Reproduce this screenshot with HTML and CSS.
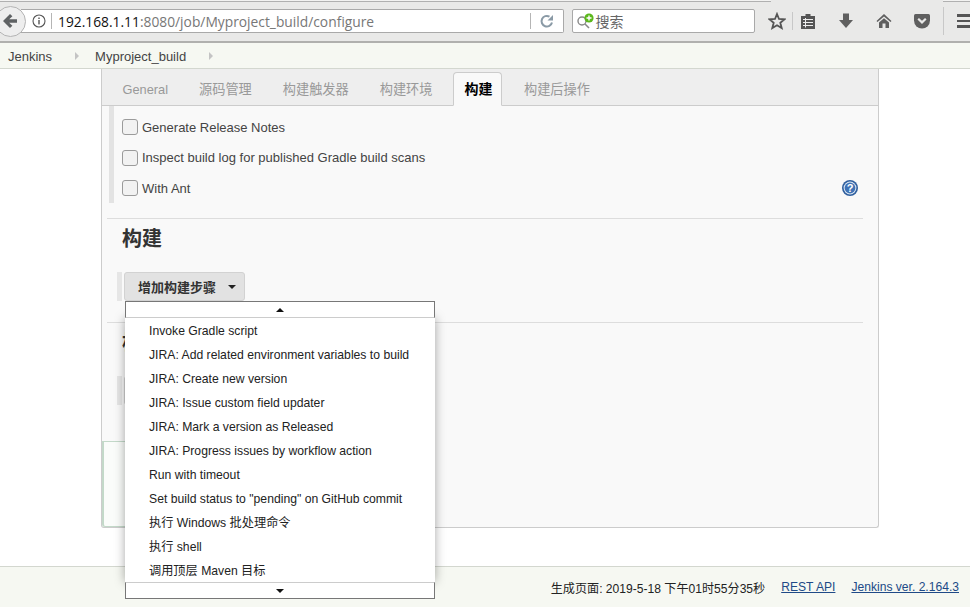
FILE: index.html
```html
<!DOCTYPE html>
<html lang="zh-CN">
<head>
    <meta charset="UTF-8">
    <title>Myproject_build Config</title>
    <link rel="stylesheet" href="styles.css">
</head>
<body>
  <div class="tabstrip">
    <span class="edge left"></span>
    <span class="edge gap"></span>
    <span class="edge right"></span>
  </div>
  <header class="toolbar">
    <div class="back-btn">
      <svg width="16" height="16" viewBox="0 0 16 16"><path d="M8 1 L1 8 L8 15 L10.4 12.8 L7.2 9.8 H15 V6.2 H7.2 L10.4 3.2 Z" fill="#5f6264"/></svg>
    </div>
    <div class="urlbar">
      <svg class="info" width="14" height="14" viewBox="0 0 14 14"><circle cx="7" cy="7" r="6" fill="none" stroke="#555" stroke-width="1.1"/><rect x="6.3" y="6" width="1.4" height="4.4" fill="#555"/><rect x="6.3" y="3.5" width="1.4" height="1.5" fill="#555"/></svg>
      <span class="url-sep"></span>
      <span class="url"><span class="url-host">192.168.1.11</span>:8080/job/Myproject_build/configure</span>
      <span class="url-sep right"></span>
      <svg class="reload" width="16" height="16" viewBox="0 0 16 16"><path d="M13 9.5 A5.3 5.3 0 1 1 10.5 3.6" fill="none" stroke="#8a9aa6" stroke-width="2"/><path d="M8.5 7.5 H14 V2 Z" fill="#8a9aa6"/></svg>
    </div>
    <div class="searchbar">
      <svg class="search-icon" width="20" height="18" viewBox="0 0 20 18"><circle cx="6" cy="9" r="4" fill="none" stroke="#888" stroke-width="1.4"/><path d="M9 12 L13 16" stroke="#888" stroke-width="1.6"/><circle cx="13" cy="6" r="4.6" fill="#5cb81c"/><path d="M13 3.5 V8.5 M10.5 6 H15.5" stroke="#fff" stroke-width="1.4"/></svg>
      <span class="search-text">搜索</span>
    </div>
    <div class="tool-icons">
      <svg width="18" height="18" viewBox="0 0 18 18"><path d="M9 2 L11 7 L16.5 7.3 L12.3 10.8 L13.7 16 L9 13.2 L4.3 16 L5.7 10.8 L1.5 7.3 L7 7 Z" fill="none" stroke="#555" stroke-width="1.8"/></svg>
      <span class="tool-sep"></span>
      <svg class="ic-list" width="16" height="18" viewBox="0 0 16 18"><path d="M1 4 H5.5 V2 H10.5 V4 H15 V17 H1 Z" fill="#555"/><path d="M3 7.5 H13 M3 10.5 H13 M3 13.5 H13" stroke="#eee" stroke-width="1.2"/><path d="M5.5 6 V15.5" stroke="#eee" stroke-width="1"/></svg>
      <svg class="ic-down" width="16" height="18" viewBox="0 0 16 18"><path d="M5 1.5 H11 V8 H15 L8 16 L1 8 H5 Z" fill="#5f5f5f"/></svg>
      <svg class="ic-home" width="18" height="18" viewBox="0 0 18 18"><path d="M9 2 L1.5 9 L2.5 10 L9 4.5 L15.5 10 L16.5 9 Z" fill="#5f5f5f"/><path d="M4 10.5 L9 6.2 L14 10.5 V16 H10.5 V11.5 H7.5 V16 H4 Z" fill="#5f5f5f"/></svg>
      <svg class="ic-pocket" width="18" height="18" viewBox="0 0 18 18"><path d="M2.5 2 H15.5 Q17 2 17 3.5 V8.5 A8 8 0 0 1 1 8.5 V3.5 Q1 2 2.5 2 Z" fill="#5f5f5f"/><path d="M5.2 6.8 L9 10.4 L12.8 6.8" fill="none" stroke="#e9e9e8" stroke-width="2.2"/></svg>
      <span class="tool-sep tall"></span>
      <span class="hamburger"><i></i><i></i><i></i></span>
    </div>
  </header>

  <nav class="breadcrumbs">
    <a>Jenkins</a><span class="crumb-arrow"></span>
    <a>Myproject_build</a><span class="crumb-arrow"></span>
  </nav>

  <main class="page">
    <section class="panel">
      <div class="tabbar">
        <span class="tab latin">General</span>
        <span class="tab">源码管理</span>
        <span class="tab">构建触发器</span>
        <span class="tab">构建环境</span>
        <span class="tab active">构建</span>
        <span class="tab">构建后操作</span>
      </div>

      <div class="options">
        <label class="option"><input type="checkbox">Generate Release Notes</label>
        <label class="option"><input type="checkbox">Inspect build log for published Gradle build scans</label>
        <label class="option"><input type="checkbox">With Ant
          <svg class="help" width="16" height="16" viewBox="0 0 16 16"><circle cx="8" cy="8" r="8" fill="#2f5f9e"/><circle cx="8" cy="8" r="6.4" fill="#dfe8f3"/><circle cx="8" cy="8" r="5.4" fill="#3f72b5"/><text x="8" y="11.8" text-anchor="middle" class="help-mark">?</text></svg>
        </label>
      </div>

      <div class="section">
        <h2 class="section-title">构建</h2>
        <div class="add-step">
          <button class="add-btn">增加构建步骤<span class="caret"></span></button>
        </div>
      </div>

      <!-- this section sits behind the open menu, only its left edge shows -->
      <div class="section after">
        <h2 class="section-title sliver">构</h2>
        <div class="add-step">
          <button class="add-btn covered"></button>
        </div>
      </div>

      <div class="savebar"></div>
    </section>
  </main>

  <footer class="footer">
    <span>生成页面: 2019-5-18 下午01时55分35秒</span>
    <a>REST API</a>
    <a>Jenkins ver. 2.164.3</a>
  </footer>

  <div class="menu">
    <div class="menu-scroll up"><span></span></div>
    <ul class="menu-list">
      <li>Invoke Gradle script</li>
      <li>JIRA: Add related environment variables to build</li>
      <li>JIRA: Create new version</li>
      <li>JIRA: Issue custom field updater</li>
      <li>JIRA: Mark a version as Released</li>
      <li>JIRA: Progress issues by workflow action</li>
      <li>Run with timeout</li>
      <li>Set build status to "pending" on GitHub commit</li>
      <li>执行 Windows 批处理命令</li>
      <li>执行 shell</li>
      <li>调用顶层 Maven 目标</li>
    </ul>
    <div class="menu-scroll down"><span></span></div>
  </div>
</body>
</html>
```

FILE: styles.css
```css
* {
    margin: 0;
    padding: 0;
    box-sizing: border-box;
}
html, body {
    height: 607px;
    overflow: hidden;
}
body {
    display: flex;
    flex-direction: column;
    background: white;
    color: #333;
    font-family: "Liberation Sans", "Noto Sans CJK SC", sans-serif;
    font-size: 13px;
}

/* browser chrome */
.tabstrip {
    display: flex;
    flex: none;
    height: 2px;
    background: #e9e9e8;
}
.edge.left {
    width: 771px;
    background: #f2f2f1;
    border-bottom: 1px solid #b0b0b0;
}
.edge.gap {
    width: 172px;
}
.edge.right {
    flex: 1;
    background: #f2f2f1;
    border-bottom: 1px solid #b0b0b0;
}
.toolbar {
    display: flex;
    align-items: center;
    flex: none;
    height: 41px;
    padding-bottom: 1px;
    background: #e9e9e8;
    border-bottom: 2px solid #b0b0ae;
}
.back-btn {
    display: flex;
    align-items: center;
    justify-content: center;
    flex: none;
    position: relative;
    z-index: 1;
    width: 31px;
    height: 31px;
    margin-left: -5px;
    padding-right: 1px;
    background: #eee;
    border: 1px solid #b4b4b4;
    border-radius: 50%;
}
.urlbar {
    display: flex;
    align-items: center;
    width: 544px;
    height: 24px;
    margin-left: -5px;
    background: white;
    border: 1px solid #a9a9a9;
    border-left: none;
    border-radius: 0 2px 2px 0;
}
.info {
    margin-left: 11px;
}
.url-sep {
    width: 1px;
    height: 16px;
    margin-left: 5px;
    background: #b5b5b5;
}
.url-sep.right {
    margin-left: auto;
}
.url {
    margin-left: 6px;
    font-family: "Open Sans", "Noto Sans", sans-serif;
    font-size: 13.8px;
    color: #777;
    white-space: nowrap;
}
.url-host {
    color: #111;
}
.reload {
    margin: 0 8px 0 8px;
}
.searchbar {
    display: flex;
    align-items: center;
    width: 184px;
    height: 24px;
    margin-left: 8px;
    background: white;
    border: 1px solid #a9a9a9;
    border-radius: 2px;
}
.search-icon {
    margin-left: 3px;
    flex: none;
}
.search-text {
    font-family: "Noto Sans CJK SC", sans-serif;
    font-size: 14px;
    color: #666;
}
.tool-icons {
    display: flex;
    align-items: center;
    height: 30px;
    margin-left: 13px;
}
.tool-sep {
    width: 1px;
    height: 18px;
    margin: 0 7px 0 6px;
    background: #c8c8c8;
}
.tool-sep.tall {
    height: 28px;
    margin: 0 13px 0 12px;
}
.ic-down {
    margin-left: 22px;
}
.ic-home {
    margin-left: 21px;
}
.ic-pocket {
    margin-left: 20px;
}
.hamburger {
    display: flex;
    flex-direction: column;
    gap: 3px;
    width: 13px;
}
.hamburger i {
    display: block;
    height: 2.5px;
    background: #555;
}

/* jenkins breadcrumb */
.breadcrumbs {
    display: flex;
    align-items: center;
    flex: none;
    height: 26px;
    padding: 1px 0 0 8px;
    background: #f6f8f2;
    border-bottom: 1px solid #d3d7cf;
    color: #444;
}
.crumb-arrow {
    width: 0;
    height: 0;
    margin: 0 16px 0 23px;
    border-left: 4px solid #c4c4c4;
    border-top: 4px solid transparent;
    border-bottom: 4px solid transparent;
}

/* config panel */
.page {
    flex: 1;
    padding: 0 91px 38px 101px;
    min-height: 0;
}
.panel {
    display: flex;
    flex-direction: column;
    height: 100%;
    background: #f9f9f9;
    border: 1px solid #ccc;
    border-top: none;
    border-radius: 0 0 3px 3px;
}
.tabbar {
    display: flex;
    align-items: flex-end;
    flex: none;
    height: 37px;
    padding-left: 5px;
    background: #eee;
    border-bottom: 1px solid #ccc;
}
.tab {
    height: 34px;
    padding: 2px 14.5px 0;
    line-height: 32px;
    font-size: 13.2px;
    color: #999;
    border: 1px solid transparent;
    white-space: nowrap;
}
.tab.latin {
    font-size: 12.8px;
}
.tab.active {
    margin: 0 6px -1px 5.5px;
    padding: 0 9px 0 10px;
    background: #f9f9f9;
    border-color: #ccc;
    border-bottom-color: #f9f9f9;
    border-radius: 4px 4px 0 0;
    font-size: 14px;
    color: #000;
    font-weight: bold;
}
.options {
    display: flex;
    flex-direction: column;
    flex: none;
    height: 97px;
    margin-left: 7px;
    padding: 3px 0 0 8px;
    border-left: 5px solid #e3e3e3;
}
.option {
    display: flex;
    align-items: center;
    flex: none;
    height: 30.5px;
    padding-top: 6px;
    color: #444;
}
.option input {
    appearance: none;
    width: 16px;
    height: 16px;
    margin-right: 4px;
    background: #f2f2f2;
    border: 1px solid #9b9b9b;
    border-radius: 3px;
}
.help {
    margin-left: auto;
    margin-right: 20px;
}
.help-mark {
    fill: white;
    font-size: 11px;
    font-weight: bold;
}
.section {
    flex: none;
    height: 104px;
    margin: 15px 15px 0 5px;
    padding-left: 15px;
    border-top: 1px solid #ddd;
}
.section-title {
    height: 53px;
    line-height: 40px;
    font-size: 20px;
    color: #333;
}
.section-title.sliver {
    width: 3px;
    overflow: hidden;
}
.add-step {
    margin-left: -5px;
    padding-left: 2px;
    width: 130px;
    height: 29px;
    border-left: 5px solid #e6e6e6;
}
.add-btn {
    display: flex;
    align-items: center;
    width: 121px;
    height: 29px;
    padding: 0 9px 0 13px;
    background: #e2e2e2;
    border: 1px solid #d2d2d2;
    border-radius: 3px;
    font-family: "Noto Sans CJK SC", sans-serif;
    font-size: 13px;
    font-weight: bold;
    color: #333;
    white-space: nowrap;
}
.caret {
    flex: none;
    width: 0;
    height: 0;
    margin-left: 12px;
    border-top: 4px solid #222;
    border-left: 4px solid transparent;
    border-right: 4px solid transparent;
}
.section.after {
    height: 119px;
    margin-top: 0;
}
.savebar {
    flex: 1;
    width: 60px;
    background: #fafcfa;
    border: 2px solid #c3d9c9;
    border-width: 1px 0 1px 2px;
    border-radius: 0 0 0 3px;
}

/* footer */
.footer {
    display: flex;
    align-items: center;
    justify-content: flex-end;
    flex: none;
    gap: 16px;
    height: 41px;
    padding-right: 11px;
    background: #f6f8f2;
    border-top: 1px solid #d3d7cf;
    font-size: 12.1px;
    color: #222;
}
.footer a {
    color: #204a87;
    text-decoration: underline;
}

/* dropdown, opened over the page */
.menu {
    position: absolute;
    left: 125px;
    top: 301px;
    width: 310px;
    height: 298px;
    display: flex;
    flex-direction: column;
}
.menu-scroll {
    display: flex;
    align-items: center;
    justify-content: center;
    flex: none;
    position: relative;
    z-index: 1;
    height: 17px;
    background: white;
    border: 1px solid #777;
}
.menu-scroll.up {
    border-bottom: 1px solid #ccc;
}
.menu-scroll.down {
    border-top: 1px solid #ccc;
}
.menu-scroll span {
    width: 0;
    height: 0;
    border-left: 4px solid transparent;
    border-right: 4px solid transparent;
}
.menu-scroll.up span {
    border-bottom: 4px solid #111;
}
.menu-scroll.down span {
    border-top: 4px solid #111;
}
.menu-list {
    flex: 1;
    padding-top: 1px;
    overflow: hidden;
    list-style: none;
    background: white;
    box-shadow: 0 0 10px rgba(0, 0, 0, 0.35);
}
.menu-list li {
    height: 24px;
    padding-left: 24px;
    line-height: 24px;
    font-size: 12.2px;
    color: #222;
    white-space: nowrap;
}
```
